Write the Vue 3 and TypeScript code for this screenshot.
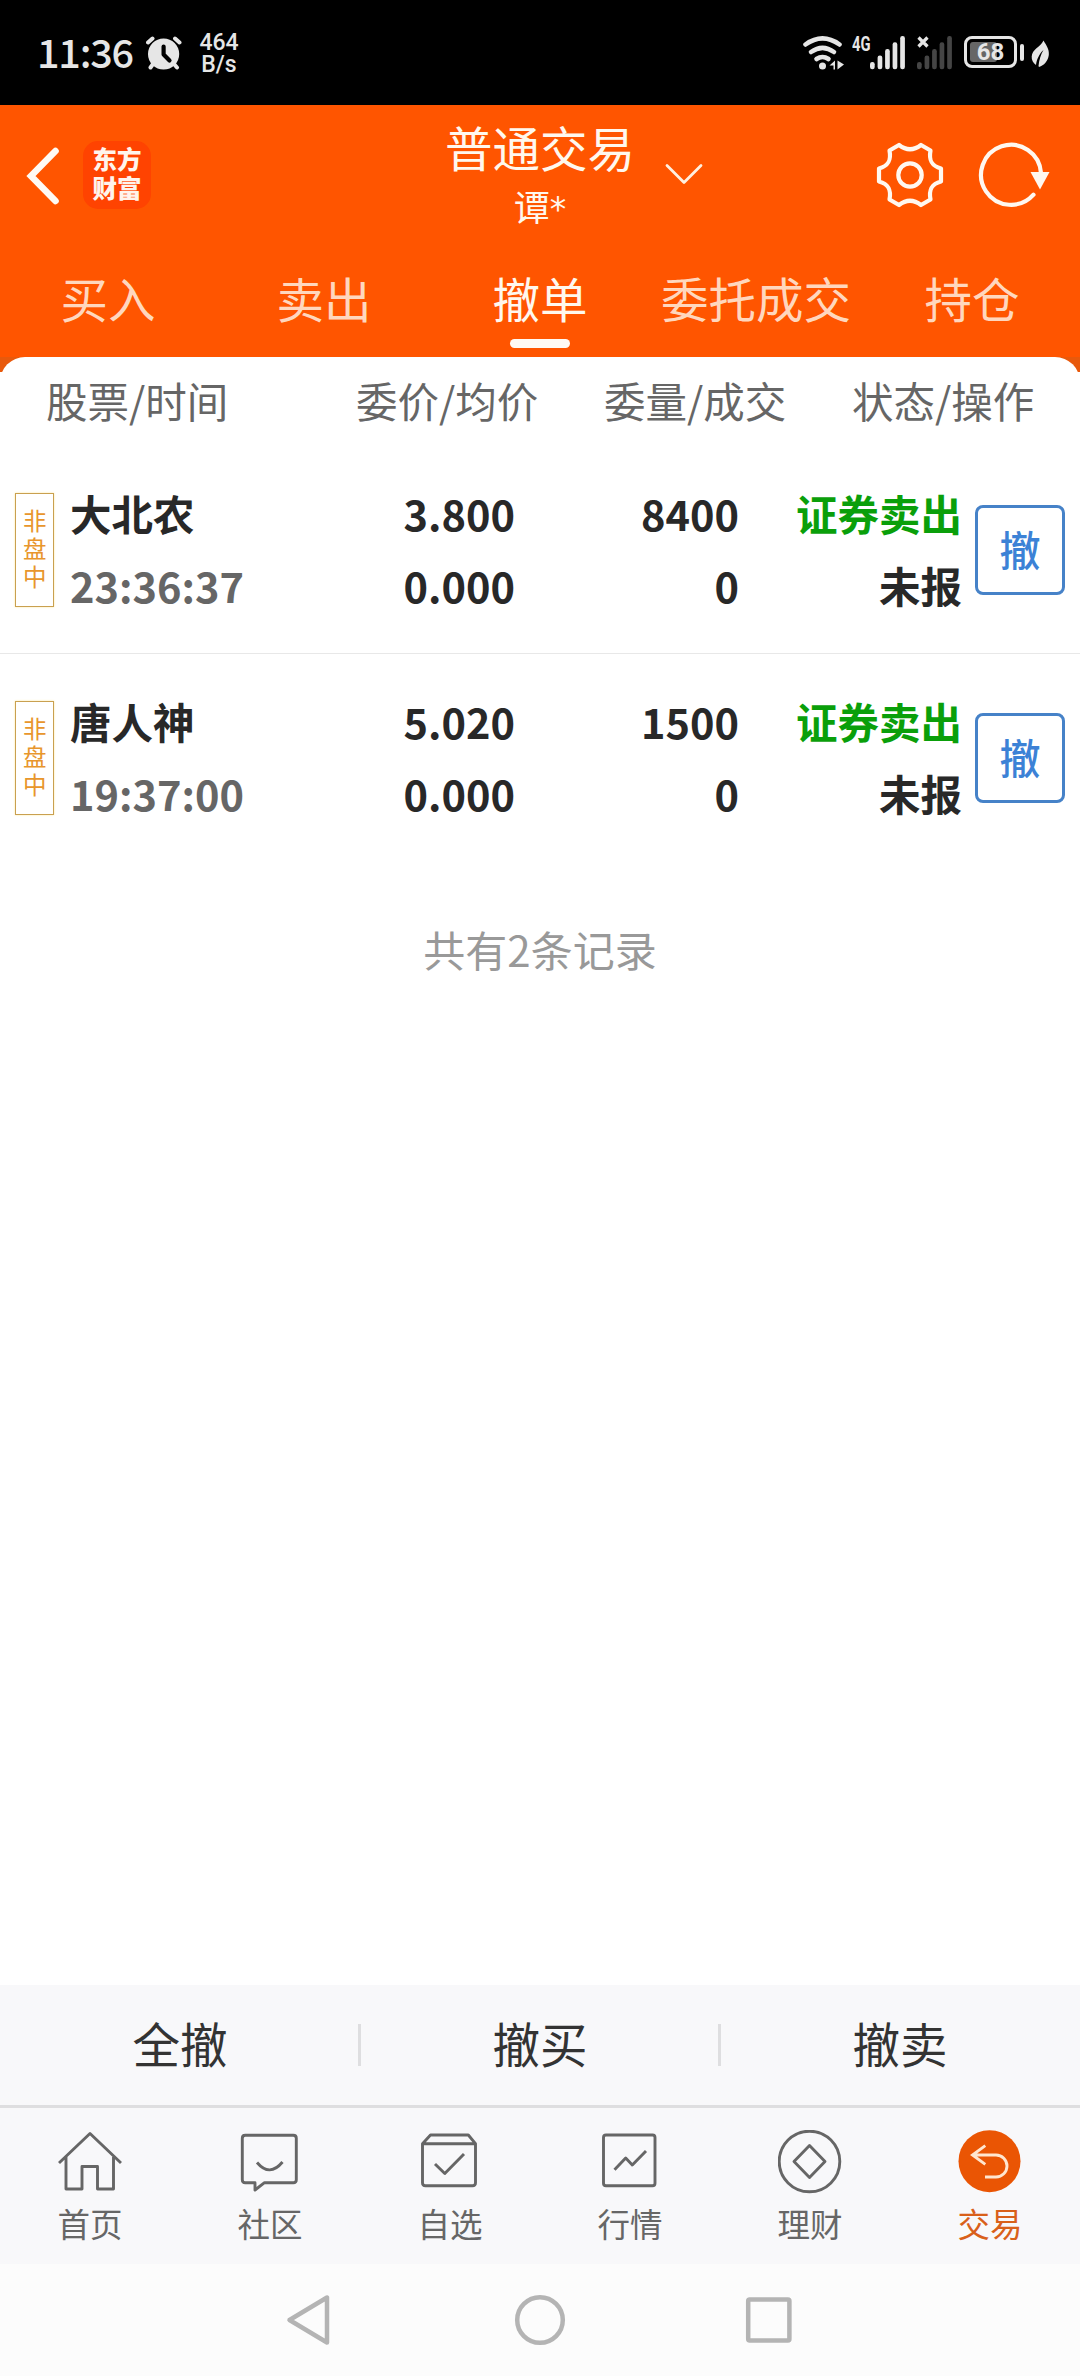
<script setup lang="ts">
interface Order {
  name: string
  time: string
  price: string
  avg: string
  qty: string
  filled: string
}

const tabs: string[] = ['买入', '卖出', '撤单', '委托成交', '持仓']
const activeTab = '撤单'
const columns: string[] = ['股票/时间', '委价/均价', '委量/成交', '状态/操作']
const orders: Order[] = [
  { name: '大北农', time: '23:36:37', price: '3.800', avg: '0.000', qty: '8400', filled: '0' },
  { name: '唐人神', time: '19:37:00', price: '5.020', avg: '0.000', qty: '1500', filled: '0' },
]
const actions: string[] = ['全撤', '撤买', '撤卖']
const signal = [
  { x: 0, y: 26 },
  { x: 7.6, y: 19.5 },
  { x: 15.1, y: 13 },
  { x: 22.6, y: 6.3 },
  { x: 30.2, y: 0 },
]
</script>

<template>
  <div class="screen">
    <div class="status">
      <span class="clock">11:36</span>
      <svg class="alarm" width="36" height="34" viewBox="0 0 36 34">
        <circle cx="17.6" cy="18" r="15.6" fill="#e6e6e6" />
        <path d="M2 6.5L6.5 2.5M33.5 6.5L29 2.5M7 28L4.5 31.5M28 28L31 31.5" stroke="#e6e6e6" stroke-width="4" stroke-linecap="round" />
        <path d="M17.6 10.500V18.500L23.500 24.500" fill="none" stroke="#000" stroke-width="4.200" stroke-linecap="round" stroke-linejoin="round" />
      </svg>
      <span class="speed">464 B/s</span>
      <span class="grow"></span>
      <svg class="wifi" width="42" height="34" viewBox="0 0 42 34" fill="none" stroke="#e6e6e6" stroke-width="4.600" stroke-linecap="round">
        <path d="M2.500 8.500Q19.500 -3.600 36.500 8.500" />
        <path d="M8 16Q19.500 7.600 31 16" />
        <path d="M13.500 23Q19.500 19 25.500 23" />
        <circle cx="19.500" cy="30" r="3.500" fill="#e6e6e6" stroke="none" />
        <path d="M26.500 29.500L32 24.500V33.500H30.500V29.500ZM34.500 33.500V24.500L41 28.500Z" fill="#e6e6e6" stroke="none" />
      </svg>
      <svg class="net" width="20" height="28" viewBox="0 -5 20 28">
        <text x="0" y="15" textLength="18.500" lengthAdjust="spacingAndGlyphs">4G</text>
      </svg>
      <svg class="bars" width="35" height="34" viewBox="0 0 35 34">
        <rect v-for="b in signal" :key="b.x" :x="b.x" :y="b.y" width="4.700" :height="33.300 - b.y" rx="2.200" fill="#e6e6e6" />
      </svg>
      <svg class="bars2" width="35" height="34" viewBox="0 0 35 34">
        <rect v-for="b in signal" :key="b.x" :x="b.x" :y="b.y" width="4.700" :height="33.300 - b.y" rx="2.200" fill="#454545" />
        <path d="M1.500 1.500L10.500 10.500M10.500 1.500L1.500 10.500" stroke="#e6e6e6" stroke-width="3.200" />
      </svg>
      <span class="battery"><i class="level"></i><b>68</b></span>
      <span class="nub"></span>
      <svg class="leaf" width="19" height="28" viewBox="0 0 19 28">
        <path d="M12.500 0.500C15 5 18.500 9 17.800 15C17 21 13 25.500 8 27L7.500 26C8 20 10 14 12.500 10C8 14 5.500 20 5 25C2 23 0.500 20 0.700 16.500C1.200 9 9 7.500 12.500 0.500Z" fill="#e6e6e6" />
      </svg>
    </div>

    <header class="header">
      <div class="topbar">
        <div class="side">
          <svg class="back" width="36" height="60" viewBox="0 0 36 60">
            <path d="M30.500 6L6 31L30.500 56" fill="none" stroke="#fffaf4" stroke-width="6.600" stroke-linecap="round" stroke-linejoin="miter" />
          </svg>
          <div class="logo">东方财富</div>
        </div>
        <div class="titles">
          <div class="title">普通交易</div>
          <div class="user">谭<span class="star">*</span></div>
        </div>
        <div class="side right">
          <svg class="down" width="40" height="24" viewBox="0 0 40 24">
            <path d="M3 2.500L20 19.500L37 2.500" fill="none" stroke="#fff0e0" stroke-width="2.800" stroke-linecap="round" stroke-linejoin="round" />
          </svg>
          <svg class="gear" width="68" height="68" viewBox="-34 -34 68 68" fill="none" stroke="#fff8f0" stroke-width="4.200" stroke-linejoin="round">
            <circle r="11.700" />
            <path d="M-11 -30Q0 -21.500 11 -30L20.500 -24.500C18.500 -14 22 -9 31 -6.500V6.500C22 9 18.500 14 20.500 24.500L11 30Q0 21.500 -11 30L-20.500 24.500C-18.500 14 -22 9 -31 6.500V-6.500C-22 -9 -18.500 -14 -20.500 -24.500Z" />
          </svg>
          <svg class="refresh" width="74" height="68" viewBox="-34 -34 74 68">
            <path d="M22.500 19.700A30 30 0 1 1 30 -2" fill="none" stroke="#fff8f0" stroke-width="4.200" stroke-linecap="round" />
            <path d="M19.500 -3H38.500L29 14.500Z" fill="#fff8f0" />
          </svg>
        </div>
      </div>
      <nav class="tabs">
        <div v-for="t in tabs" :key="t" class="tab" :class="{ on: t === activeTab }">
          <span>{{ t }}</span>
          <i></i>
        </div>
      </nav>
    </header>

    <main class="sheet">
      <div class="card">
        <div class="cols"><span v-for="c in columns" :key="c">{{ c }}</span></div>
        <div v-for="o in orders" :key="o.name" class="order">
          <div class="badge"><div class="tag">非盘中</div></div>
          <div class="cell left"><span>{{ o.name }}</span><span class="time">{{ o.time }}</span></div>
          <div class="cell"><span>{{ o.price }}</span><span>{{ o.avg }}</span></div>
          <div class="cell"><span>{{ o.qty }}</span><span>{{ o.filled }}</span></div>
          <div class="cell"><span class="sell">证券卖出</span><span>未报</span></div>
          <button class="cancel">撤</button>
        </div>
        <p class="count">共有2条记录</p>
      </div>
    </main>

    <div class="actions">
      <div v-for="a in actions" :key="a" class="action"><span>{{ a }}</span></div>
    </div>

    <footer class="dock">
      <div class="item">
        <svg viewBox="0 0 64 64"><path d="M1 33L32 3.500L63 33M8 27V59H24V36.500H39.500V59H55.500V27" /></svg>
        <span>首页</span>
      </div>
      <div class="item">
        <svg viewBox="0 0 64 64"><path d="M7.300 5.300H55.300Q58.300 5.300 58.300 8.300V49.700Q58.300 52.700 55.300 52.700H26.500L17 60V52.700H7.300Q4.300 52.700 4.300 49.700V8.300Q4.300 5.300 7.300 5.300ZM19 32.500Q31.700 47.500 44.500 32" /></svg>
        <span>社区</span>
      </div>
      <div class="item">
        <svg viewBox="0 0 64 64"><path d="M4.500 13.700L12.500 5H50.300L57.500 13.700V52.700Q57.500 55.700 54.500 55.700H7.500Q4.500 55.700 4.500 52.700ZM4.500 13.700H57.500M17 34L26.800 43.500L46 24" /></svg>
        <span>自选</span>
      </div>
      <div class="item">
        <svg viewBox="0 0 64 64"><rect x="5.500" y="5" width="51.500" height="50.700" rx="2.500" /><path d="M16.500 39.700L27.700 28L34.300 35L48 21" /></svg>
        <span>行情</span>
      </div>
      <div class="item">
        <svg viewBox="0 0 64 64"><circle cx="31.500" cy="31.500" r="30.300" /><path d="M31.500 15.500L47 31.500L31.500 47.500L16 31.500Z" /></svg>
        <span>理财</span>
      </div>
      <div class="item hot">
        <svg viewBox="0 0 64 64"><circle class="disc" cx="31.500" cy="31.200" r="31" /><path class="arrow" d="M27.300 15.700L14.500 25L27.300 34.300M14.500 25H38A11 11 0 0 1 38 47H27" /></svg>
        <span>交易</span>
      </div>
    </footer>

    <div class="sysnav">
      <svg class="tri" width="46" height="54" viewBox="0 0 46 54"><path d="M42 4.500V49.500L4.500 27Z" /></svg>
      <svg class="circ" width="54" height="54" viewBox="0 0 54 54"><circle cx="27" cy="27" r="22.800" /></svg>
      <svg class="sq" width="54" height="54" viewBox="0 0 54 54"><rect x="6.200" y="6.400" width="41.200" height="41.200" rx="1.500" /></svg>
    </div>
  </div>
</template>

<style>
body {
  margin: 0;
  background: #fff;
}
</style>

<style scoped>
.screen {
  width: 1080px;
  height: 2376px;
  display: flex;
  flex-direction: column;
  overflow: hidden;
  background: #fff;
  font-family: "Noto Sans CJK SC", "Noto Sans", sans-serif;
  color: #282828;
}
.screen svg {
  display: block;
  flex: none;
}

/* status bar */
.status {
  box-sizing: border-box;
  height: 105px;
  background: #000;
  color: #e6e6e6;
  display: flex;
  align-items: flex-start;
  padding: 36px 30px 0 37px;
}
.clock {
  width: 109px;
  margin-top: -3px;
  font-size: 39.500px;
  line-height: 36px;
  letter-spacing: -1.200px;
  font-weight: 500;
  white-space: nowrap;
}
.speed {
  margin-left: 17px;
  width: 40px;
  margin-top: -4px;
  text-align: center;
  font: 500 23px/22px Roboto, sans-serif;
}
.grow {
  flex: 1;
}
.net {
  margin: -5px 0 0 7px;
}
.net text {
  font: 700 20px Roboto, sans-serif;
  fill: #e6e6e6;
}
.bars {
  margin-left: -2px;
}
.bars2 {
  margin-left: 12px;
}
.battery {
  position: relative;
  box-sizing: border-box;
  width: 53px;
  height: 32px;
  margin-left: 12px;
  border: 3px solid #e6e6e6;
  border-radius: 8px;
}
.level {
  display: block;
  width: 27px;
  height: 20px;
  margin: 3px;
  background: #666;
  border-radius: 3px;
}
.battery b {
  position: absolute;
  inset: 0;
  text-align: center;
  font: 700 24px/27px Roboto, sans-serif;
}
.nub {
  width: 4px;
  height: 17px;
  margin: 8px 0 0 3px;
  border-radius: 2px;
  background: #e6e6e6;
}
.leaf {
  margin: 4px 0 0 7px;
}

/* header */
.header {
  height: 252px;
  background: #f50;
}
.topbar {
  height: 141px;
  display: grid;
  grid-template-columns: 1fr 200px 1fr;
}
.side {
  display: flex;
  align-items: center;
  padding-bottom: 1px;
}
.back {
  margin-left: 25px;
}
.logo {
  box-sizing: border-box;
  width: 68px;
  height: 68px;
  margin-left: 22px;
  padding: 3px 8px 0 9.500px;
  border-radius: 15px;
  background: #ff4301;
  color: #fff4ec;
  font-size: 24.500px;
  line-height: 29px;
  font-weight: 900;
  word-break: break-all;
}
.titles {
  text-align: center;
  color: #fff8ee;
}
.title {
  margin-top: 12px;
  font-size: 47.500px;
  line-height: 60px;
  white-space: nowrap;
}
.user {
  font-size: 36px;
  line-height: 56px;
}
.star {
  font-family: "DejaVu Sans", sans-serif;
  font-size: 33px;
  line-height: 0;
}
.down {
  margin-left: 24px;
}
.gear {
  margin-left: 172px;
}
.refresh {
  margin-left: 33px;
}
.tabs {
  height: 111px;
  display: grid;
  grid-template-columns: repeat(5, 1fr);
}
.tab {
  display: flex;
  flex-direction: column;
  align-items: center;
  color: #ffd7be;
  font-size: 47.500px;
  line-height: 70px;
  padding-top: 17px;
  white-space: nowrap;
}
.tab i {
  display: none;
  width: 60px;
  height: 9px;
  border-radius: 5px;
  margin-top: 6px;
  background: #fffaf4;
}
.tab.on {
  color: #fff8ee;
}
.tab.on i {
  display: block;
}

/* order list */
.sheet {
  flex: 1;
  background: linear-gradient(#e8590c 15px, #fff 15px);
}
.card {
  height: 100%;
  background: #fff;
  border-radius: 25px 25px 0 0;
}
.cols {
  height: 89px;
  padding: 0 46px;
  display: grid;
  grid-template-columns: 310px 248px 248px auto;
  font-size: 41.500px;
  line-height: 86px;
  color: #666;
  white-space: nowrap;
}
.order {
  box-sizing: border-box;
  height: 208px;
  padding: 0 15px;
  display: grid;
  grid-template-columns: 55px 200px 245px 224px 223px 103px;
  align-items: center;
  border-bottom: 1px solid #e8e8e8;
}
.order + .order {
  border-bottom-color: transparent;
}
.badge {
  box-sizing: border-box;
  width: 39px;
  height: 114px;
  border: 1px solid #c9a050;
  box-shadow: 0 0 2px #ffe9a0;
  padding: 12px 0 0 7px;
}
.tag {
  width: 24px;
  font-size: 23.500px;
  line-height: 28px;
  color: #e8962c;
  word-break: break-all;
}
.cell {
  display: flex;
  flex-direction: column;
  text-align: right;
  font-size: 41.500px;
  line-height: 72px;
  font-weight: 700;
  padding-bottom: 2px;
  white-space: nowrap;
}
.left {
  text-align: left;
}
.time {
  color: #666;
}
.sell {
  color: #0a9f0a;
}
.cancel {
  justify-self: end;
  box-sizing: border-box;
  width: 90px;
  height: 90px;
  border: 3px solid #4682c8;
  border-radius: 8px;
  background: none;
  padding: 0 0 5px;
  font: 500 41px/80px "Noto Sans CJK SC", sans-serif;
  color: #3c82d6;
}
.count {
  margin: 57px 0 0;
  text-align: center;
  font-size: 42px;
  line-height: 60px;
  color: #999;
}

/* batch actions */
.actions {
  height: 120px;
  display: grid;
  grid-template-columns: repeat(3, 1fr);
  background: #f8f8fa;
  border-bottom: 3px solid #dedee0;
}
.action {
  display: flex;
  align-items: center;
  text-align: center;
  font-size: 47.500px;
  line-height: 114px;
  color: #333;
}
.action span {
  flex: 1;
  margin-top: -4px;
}
.action:not(:last-child)::after {
  content: "";
  width: 3px;
  height: 42px;
  margin: 0 -1px 0 -2px;
  background: #dedee0;
}

/* bottom navigation */
.dock {
  height: 156px;
  display: grid;
  grid-template-columns: repeat(6, 1fr);
  background: #f8f8fa;
  color: #666;
}
.item {
  display: flex;
  flex-direction: column;
  align-items: center;
  padding-top: 22px;
  font-size: 32.500px;
  line-height: 44px;
}
.item svg {
  width: 64px;
  height: 64px;
  margin-bottom: 7px;
  fill: none;
  stroke: #666;
  stroke-width: 2.900;
  stroke-linejoin: round;
}
.item .disc {
  fill: #ea5504;
  stroke: none;
}
.item .arrow {
  stroke: #ffe6cf;
  stroke-linejoin: miter;
}
.hot {
  color: #d9601a;
}

/* system navigation */
.sysnav {
  height: 112px;
  display: flex;
  align-items: center;
  background: #fcfcfc;
}
.sysnav svg {
  fill: none;
  stroke: #b4b4b4;
  stroke-width: 4.500;
  stroke-linejoin: round;
}
.tri {
  margin-left: 285px;
}
.circ {
  margin-left: 182px;
}
.sq {
  margin-left: 175px;
}
</style>
